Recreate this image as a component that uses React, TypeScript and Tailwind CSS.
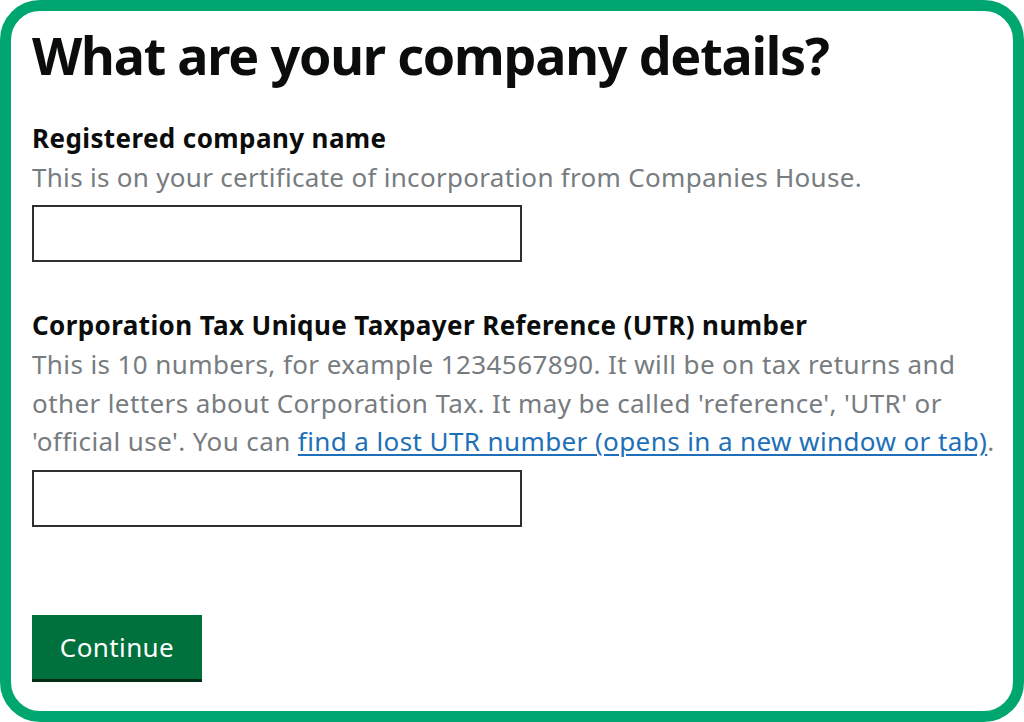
export default function App() {
  const font = { fontFamily: '"Noto Sans", Arial, sans-serif' };
  return (
    <div className="w-[1024px] h-[722px] bg-white" style={font}>
      <div className="h-full rounded-[40px] border-[11px] border-[#00a66f] pl-[21px] pt-[14px] text-[#0b0c0c]">
        <h1 className="text-[52px] font-bold leading-[60px] tracking-[-1.2px]">
          What are your company details?
        </h1>

        <div className="mt-[38px]">
          <label className="block text-[26px] font-bold leading-[30px] tracking-[0.4px]">
            Registered company name
          </label>
          <p className="mt-[5px] text-[26px] leading-[38px] tracking-[0.3px] text-[#777c80] whitespace-nowrap">
            This is on your certificate of incorporation from Companies House.
          </p>
          <input type="text" className="mt-[9px] block w-[490px] h-[57px] border-2 border-[#2f2f2f] bg-white" />
        </div>

        <div className="mt-[48px]">
          <label className="block text-[26px] font-bold leading-[30px] tracking-[0.4px]">
            Corporation Tax Unique Taxpayer Reference (UTR) number
          </label>
          <p className="mt-[5px] text-[26px] leading-[38.5px] tracking-[0.4px] text-[#777c80] whitespace-nowrap">
            This is 10 numbers, for example 1234567890. It will be on tax returns and
            <br />
            other letters about Corporation Tax. It may be called 'reference', 'UTR' or
            <br />
            'official use'. You can{" "}
            <a href="#" className="text-[#1d70b8] underline underline-offset-[3px]">
              find a lost UTR number (opens in a new window or tab)
            </a>
            .
          </p>
          <input type="text" className="mt-[9px] block w-[490px] h-[57px] border-2 border-[#2f2f2f] bg-white" />
        </div>

        <button className="mt-[88px] w-[170px] h-[64px] bg-[#00703c] text-white text-[26px] leading-none tracking-[0.4px] shadow-[0_3px_0_#002d18]">
          Continue
        </button>
      </div>
    </div>
  );
}
